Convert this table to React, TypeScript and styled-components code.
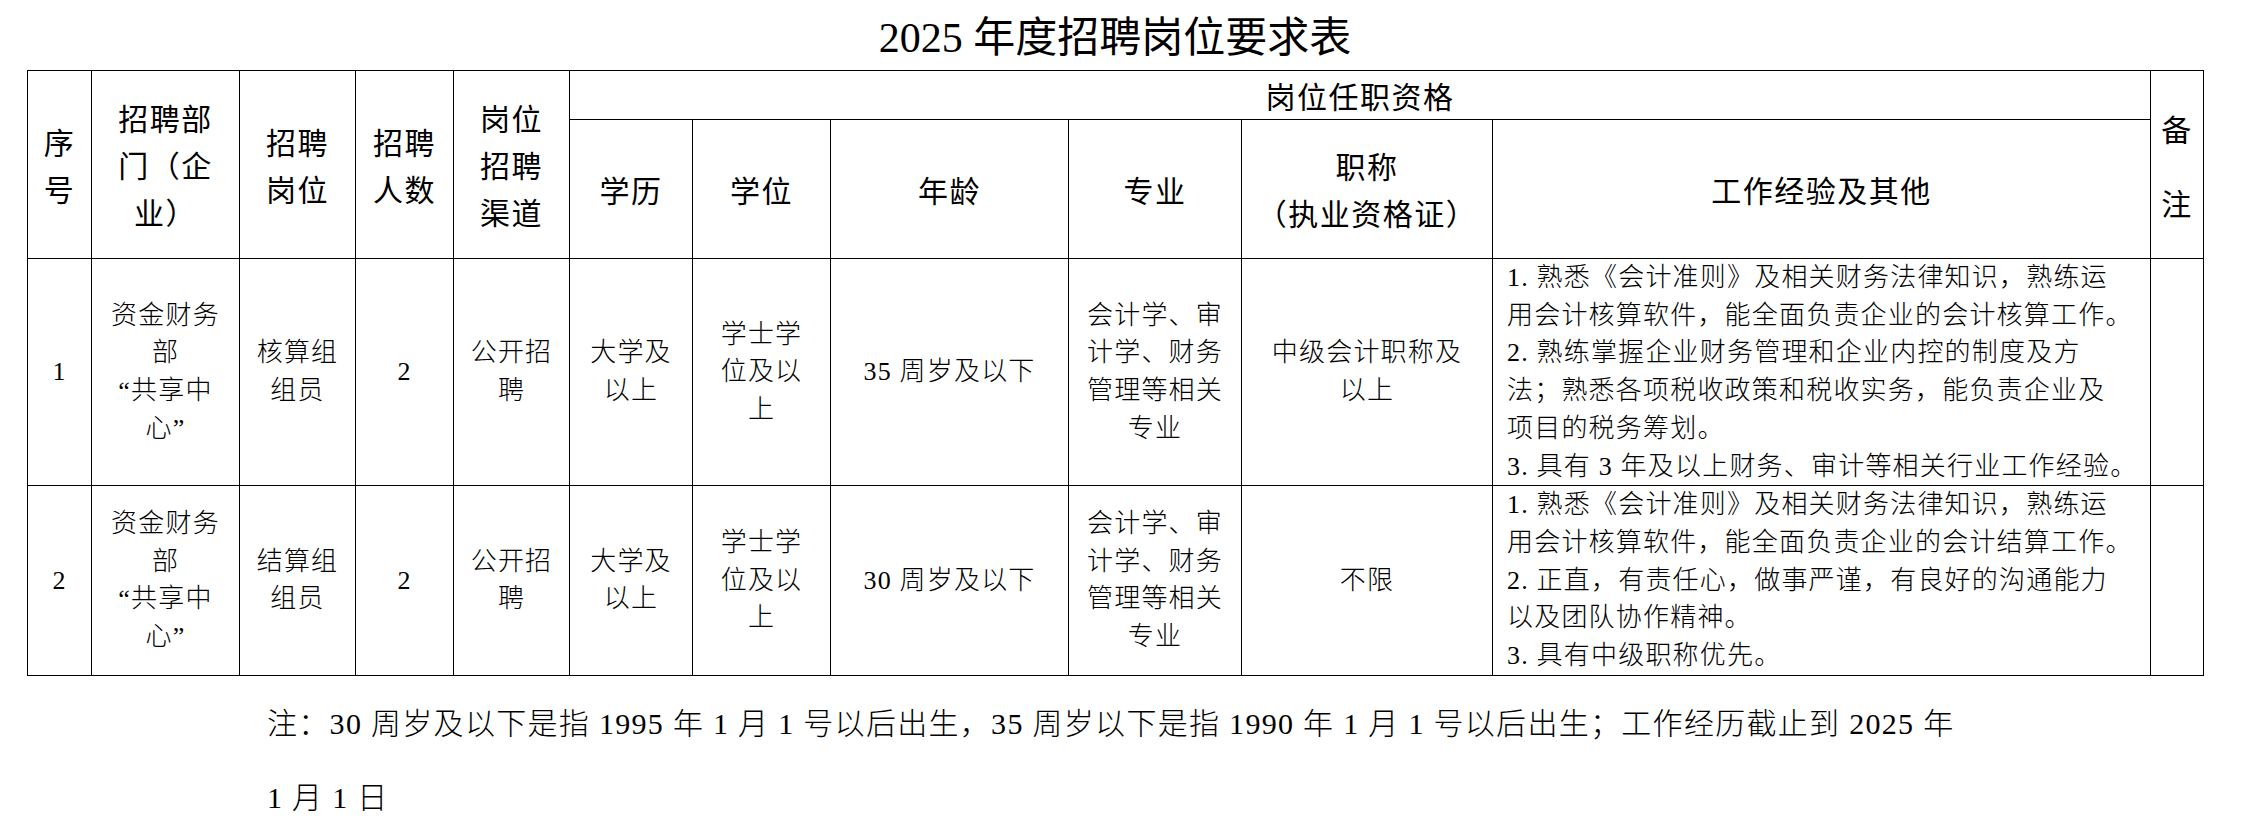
import React from 'react';
import styled, { createGlobalStyle } from 'styled-components';

const GlobalStyle = createGlobalStyle`
  html, body {
    margin: 0;
    padding: 0;
    background: #fff;
  }
  body {
    color: #000;
    font-family: "Liberation Serif", "Noto Sans CJK SC", serif;
  }
`;

const Page = styled.div`
  width: 2176px;
  margin-left: 27px;
`;

const Title = styled.h1`
  margin: 0;
  height: 70px;
  box-sizing: border-box;
  padding-top: 6px;
  line-height: 64px;
  text-align: center;
  font-family: "Liberation Serif", "Noto Sans CJK SC", serif;
  font-size: 42px;
  font-weight: 400;
`;

const Sheet = styled.table`
  width: 2176px;
  table-layout: fixed;
  border-collapse: collapse;
`;

const Row = styled.tr<{ $h: number }>`
  height: ${(p) => p.$h}px;
`;

const HeadCell = styled.th<{ $lh?: number }>`
  border: 1.5px solid #000;
  padding: 0;
  font-family: "Noto Sans CJK SC", sans-serif;
  font-weight: 400;
  font-size: 30px;
  letter-spacing: 1.5px;
  line-height: ${(p) => p.$lh ?? 47}px;
  white-space: pre-line;
  text-align: center;
  vertical-align: middle;
`;

const Cell = styled.td`
  border: 1.5px solid #000;
  padding: 0;
  font-family: "Liberation Serif", "Noto Sans CJK SC", serif;
  font-weight: 300;
  font-size: 26px;
  letter-spacing: 1.2px;
  line-height: 37.7px;
  white-space: pre-line;
  text-align: center;
  vertical-align: middle;
`;

const DetailCell = styled(Cell)`
  text-align: left;
  padding: 0 2px 0 14px;
`;

const Note = styled.p`
  margin: 11px 0 0 240px;
  font-family: "Liberation Serif", "Noto Sans CJK SC", serif;
  font-weight: 300;
  font-size: 30px;
  letter-spacing: 1.3px;
  line-height: 74px;
  white-space: pre-line;
`;

// column widths, border to border
const cols = [64, 148, 116, 98, 116, 123, 138, 238, 173, 251, 658, 53];

const positions = [
  {
    no: '1',
    dept: '资金财务\n部\n“共享中\n心”',
    post: '核算组\n组员',
    count: '2',
    channel: '公开招\n聘',
    edu: '大学及\n以上',
    degree: '学士学\n位及以\n上',
    age: '35 周岁及以下',
    major: '会计学、审\n计学、财务\n管理等相关\n专业',
    cert: '中级会计职称及\n以上',
    detail:
      '1. 熟悉《会计准则》及相关财务法律知识，熟练运\n用会计核算软件，能全面负责企业的会计核算工作。\n2. 熟练掌握企业财务管理和企业内控的制度及方\n法；熟悉各项税收政策和税收实务，能负责企业及\n项目的税务筹划。\n3. 具有 3 年及以上财务、审计等相关行业工作经验。',
    h: 226,
  },
  {
    no: '2',
    dept: '资金财务\n部\n“共享中\n心”',
    post: '结算组\n组员',
    count: '2',
    channel: '公开招\n聘',
    edu: '大学及\n以上',
    degree: '学士学\n位及以\n上',
    age: '30 周岁及以下',
    major: '会计学、审\n计学、财务\n管理等相关\n专业',
    cert: '不限',
    detail:
      '1. 熟悉《会计准则》及相关财务法律知识，熟练运\n用会计核算软件，能全面负责企业的会计结算工作。\n2. 正直，有责任心，做事严谨，有良好的沟通能力\n以及团队协作精神。\n3. 具有中级职称优先。',
    h: 188,
  },
];

export default function App() {
  return (
    <Page>
      <GlobalStyle />
      <Title>2025 年度招聘岗位要求表</Title>
      <Sheet>
        <colgroup>
          {cols.map((w, i) => (
            <col key={i} style={{ width: w }} />
          ))}
        </colgroup>
        <thead>
          <Row $h={49}>
            <HeadCell rowSpan={2}>{'序\n号'}</HeadCell>
            <HeadCell rowSpan={2}>{'招聘部\n门（企\n业）'}</HeadCell>
            <HeadCell rowSpan={2}>{'招聘\n岗位'}</HeadCell>
            <HeadCell rowSpan={2}>{'招聘\n人数'}</HeadCell>
            <HeadCell rowSpan={2}>{'岗位\n招聘\n渠道'}</HeadCell>
            <HeadCell colSpan={6}>岗位任职资格</HeadCell>
            <HeadCell rowSpan={2} $lh={74}>
              {'备\n注'}
            </HeadCell>
          </Row>
          <Row $h={139}>
            <HeadCell>学历</HeadCell>
            <HeadCell>学位</HeadCell>
            <HeadCell>年龄</HeadCell>
            <HeadCell>专业</HeadCell>
            <HeadCell>{'职称\n（执业资格证）'}</HeadCell>
            <HeadCell>工作经验及其他</HeadCell>
          </Row>
        </thead>
        <tbody>
          {positions.map((p) => (
            <Row key={p.no} $h={p.h}>
              <Cell>{p.no}</Cell>
              <Cell>{p.dept}</Cell>
              <Cell>{p.post}</Cell>
              <Cell>{p.count}</Cell>
              <Cell>{p.channel}</Cell>
              <Cell>{p.edu}</Cell>
              <Cell>{p.degree}</Cell>
              <Cell>{p.age}</Cell>
              <Cell>{p.major}</Cell>
              <Cell>{p.cert}</Cell>
              <DetailCell>{p.detail}</DetailCell>
              <Cell />
            </Row>
          ))}
        </tbody>
      </Sheet>
      <Note>
        {'注：30 周岁及以下是指 1995 年 1 月 1 号以后出生，35 周岁以下是指 1990 年 1 月 1 号以后出生；工作经历截止到 2025 年\n1 月 1 日'}
      </Note>
    </Page>
  );
}
